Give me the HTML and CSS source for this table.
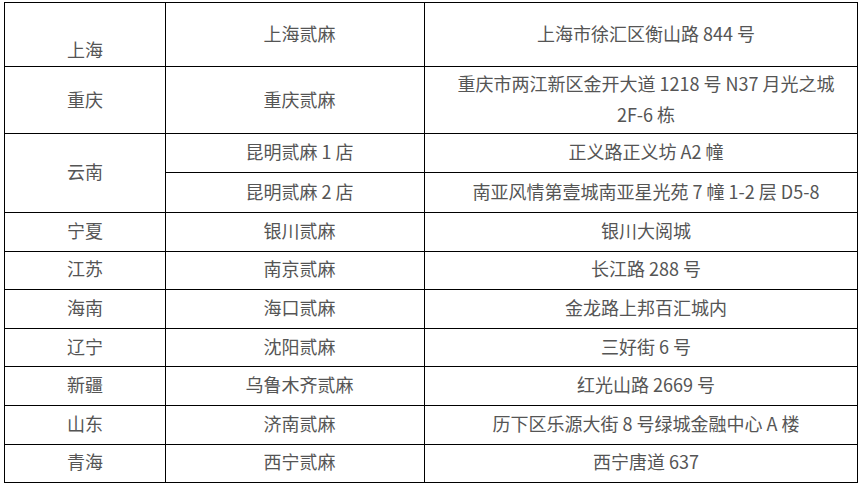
FILE: index.html
```html
<!DOCTYPE html>
<html lang="zh-CN">
<head>
<meta charset="utf-8">
<title>门店地址</title>
<link rel="stylesheet" href="styles.css">
</head>
<body>
<table class="stores">
  <colgroup>
    <col class="c-prov">
    <col class="c-store">
    <col class="c-addr">
  </colgroup>
  <tbody>
    <tr class="r-sh">
      <td class="prov low">上海</td>
      <td class="store">上海贰麻</td>
      <td class="addr">上海市徐汇区衡山路 844 号</td>
    </tr>
    <tr class="r-cq">
      <td class="prov">重庆</td>
      <td class="store">重庆贰麻</td>
      <td class="addr">重庆市两江新区金开大道 1218 号 N37 月光之城 <span class="nw">2F-6 栋</span></td>
    </tr>
    <tr class="r-yn1">
      <td class="prov" rowspan="2">云南</td>
      <td class="store">昆明贰麻 1 店</td>
      <td class="addr">正义路正义坊 A2 幢</td>
    </tr>
    <tr class="r-yn2">
      <td class="store">昆明贰麻 2 店</td>
      <td class="addr">南亚风情第壹城南亚星光苑 7 幢 1-2 层 D5-8</td>
    </tr>
    <tr class="r">
      <td class="prov">宁夏</td>
      <td class="store">银川贰麻</td>
      <td class="addr">银川大阅城</td>
    </tr>
    <tr class="r">
      <td class="prov">江苏</td>
      <td class="store">南京贰麻</td>
      <td class="addr">长江路 288 号</td>
    </tr>
    <tr class="r">
      <td class="prov">海南</td>
      <td class="store">海口贰麻</td>
      <td class="addr">金龙路上邦百汇城内</td>
    </tr>
    <tr class="r">
      <td class="prov">辽宁</td>
      <td class="store">沈阳贰麻</td>
      <td class="addr">三好街 6 号</td>
    </tr>
    <tr class="r">
      <td class="prov">新疆</td>
      <td class="store">乌鲁木齐贰麻</td>
      <td class="addr">红光山路 2669 号</td>
    </tr>
    <tr class="r">
      <td class="prov">山东</td>
      <td class="store">济南贰麻</td>
      <td class="addr">历下区乐源大街 8 号绿城金融中心 A 楼</td>
    </tr>
    <tr class="r">
      <td class="prov">青海</td>
      <td class="store">西宁贰麻</td>
      <td class="addr">西宁唐道 637</td>
    </tr>
  </tbody>
</table>
</body>
</html>
```

FILE: styles.css
```css
html, body {
  margin: 0;
  padding: 0;
  background: #fff;
}

body {
  padding: 2px 0 0 4px;
  font-family: "Noto Sans CJK SC", "Microsoft YaHei", "Noto Sans", sans-serif;
  font-size: 18px;
  color: #555;
}

.stores {
  border-collapse: collapse;
  table-layout: fixed;
  width: 853px;
}

.c-prov { width: 161px; }
.c-store { width: 259px; }
.c-addr { width: 433px; }

.stores td {
  border: 1px solid #000;
  padding: 0 0 3px;
  text-align: center;
  vertical-align: middle;
  line-height: 31px;
}

.stores td.prov { padding-left: 20px; padding-right: 20px; }
.stores td.store { padding-left: 26px; padding-right: 17px; }
.stores td.addr { padding-left: 27px; padding-right: 17px; }

.nw { white-space: nowrap; }

.r-sh td { height: 60px; padding-bottom: 3px; }
.r-sh td.low { padding-top: 30px; padding-bottom: 0; height: 33px; }
.r-cq td { height: 64px; padding-bottom: 2px; }
.r-yn1 td { height: 35px; }
.r-yn2 td { height: 36px; }
.r td { height: 34.6px; }
```
